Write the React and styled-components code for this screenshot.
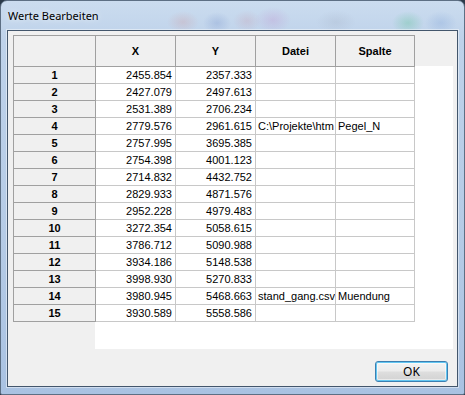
import styled, { createGlobalStyle } from 'styled-components'

const GlobalStyle = createGlobalStyle`
    html, body {
        margin: 0;
        padding: 0;
        background: #2b3a4a;
    }
`;

const Window = styled.div`
    width: 465px;
    height: 395px;
    box-sizing: border-box;
    display: flex;
    flex-direction: column;
    border-radius: 7px 7px 2px 2px;
    border: 1px solid #5d6f84;
    overflow: hidden;
    background:
        radial-gradient(ellipse 16px 11px at 182px 21px, rgba(210, 130, 130, 0.22), transparent),
        radial-gradient(ellipse 14px 11px at 216px 22px, rgba(90, 120, 190, 0.22), transparent),
        radial-gradient(ellipse 14px 11px at 246px 20px, rgba(200, 120, 140, 0.18), transparent),
        radial-gradient(ellipse 18px 13px at 272px 19px, rgba(190, 130, 200, 0.25), transparent),
        radial-gradient(ellipse 20px 12px at 335px 21px, rgba(150, 160, 180, 0.2), transparent),
        radial-gradient(ellipse 16px 12px at 407px 22px, rgba(80, 190, 140, 0.32), transparent),
        radial-gradient(ellipse 16px 12px at 440px 22px, rgba(110, 150, 210, 0.25), transparent),
        linear-gradient(180deg, #cbdcef 0%, #bed2ea 10%, #b5cbe6 60%, #a9c2e2 100%);
`;

const TitleBar = styled.div`
    height: 29px;
    flex: none;
    display: flex;
    align-items: center;
    padding-left: 7px;
    font-family: "Noto Sans", "Open Sans", sans-serif;
    font-size: 11px;
    color: #000;
    text-shadow: 0 0 6px rgba(255, 255, 255, 0.9);
`;

const Client = styled.div`
    flex: 1;
    margin: 0 6px 7px 6px;
    border: 1px solid #43566c;
    box-shadow: 0 0 0 1px rgba(255, 255, 255, 0.45);
    background: #f0f0f0;
    display: flex;
    flex-direction: column;
    padding: 4px 9px 4px 5px;
`;

const TableView = styled.div`
    width: 440px;
    height: 314px;
    flex: none;
    overflow: hidden;
    background:
        linear-gradient(#f0f0f0, #f0f0f0) 0 0 / 100% 31px no-repeat,
        linear-gradient(#f0f0f0, #f0f0f0) 0 0 / 82px 100% no-repeat,
        #ffffff;
`;

const Grid = styled.table`
    border-collapse: separate;
    border-spacing: 0;
    table-layout: fixed;
    width: 402px;
    font-family: "Liberation Sans", Arial, sans-serif;
    font-size: 11px;
    color: #000;
`;

const HeadCell = styled.th`
    height: 30px;
    padding: 0;
    font-weight: bold;
    text-align: center;
    background: #f0f0f0;
    border-top: 1px solid #a0a0a0;
    border-right: 1px solid #a0a0a0;
    border-bottom: 1px solid #a0a0a0;
    border-left: ${p => (p.$first ? '1px solid #a0a0a0' : 'none')};
`;

const RowHead = styled.th`
    height: 16px;
    padding: 0;
    font-weight: bold;
    text-align: center;
    background: #f0f0f0;
    border-left: 1px solid #a0a0a0;
    border-right: 1px solid #a0a0a0;
    border-bottom: 1px solid #a0a0a0;
`;

const Cell = styled.td`
    height: 16px;
    padding: ${p => (p.$num ? '0 3px 0 0' : '0 0 0 2px')};
    text-align: ${p => (p.$num ? 'right' : 'left')};
    white-space: nowrap;
    overflow: hidden;
    background: #fff;
    border-right: 1px solid #c8c8c8;
    border-bottom: 1px solid #c8c8c8;
`;

const Footer = styled.div`
    margin-top: auto;
    display: flex;
    justify-content: flex-end;
`;

const Button = styled.button`
    width: 73px;
    height: 21px;
    box-sizing: border-box;
    padding: 0;
    border: 1px solid #3c7fb1;
    border-radius: 3px;
    box-shadow: inset 0 0 0 1px #63c7f2, inset 0 0 0 2px rgba(255, 255, 255, 0.5);
    background: linear-gradient(180deg, #f3f3f3 0%, #ececec 48%, #dedede 52%, #d2d2d2 100%);
    font-family: "Noto Sans", "Open Sans", sans-serif;
    font-size: 12px;
    color: #000;
`;

const rows = [
    ['2455.854', '2357.333', '', ''],
    ['2427.079', '2497.613', '', ''],
    ['2531.389', '2706.234', '', ''],
    ['2779.576', '2961.615', 'C:\\Projekte\\htm', 'Pegel_N'],
    ['2757.995', '3695.385', '', ''],
    ['2754.398', '4001.123', '', ''],
    ['2714.832', '4432.752', '', ''],
    ['2829.933', '4871.576', '', ''],
    ['2952.228', '4979.483', '', ''],
    ['3272.354', '5058.615', '', ''],
    ['3786.712', '5090.988', '', ''],
    ['3934.186', '5148.538', '', ''],
    ['3998.930', '5270.833', '', ''],
    ['3980.945', '5468.663', 'stand_gang.csv', 'Muendung'],
    ['3930.589', '5558.586', '', ''],
];

const App = () => {
    return (
        <>
            <GlobalStyle />
            <Window>
                <TitleBar>Werte Bearbeiten</TitleBar>
                <Client>
                    <TableView>
                        <Grid>
                            <colgroup>
                                <col style={{ width: 83 }} />
                                <col style={{ width: 80 }} />
                                <col style={{ width: 80 }} />
                                <col style={{ width: 80 }} />
                                <col style={{ width: 79 }} />
                            </colgroup>
                            <thead>
                                <tr>
                                    <HeadCell $first></HeadCell>
                                    <HeadCell>X</HeadCell>
                                    <HeadCell>Y</HeadCell>
                                    <HeadCell>Datei</HeadCell>
                                    <HeadCell>Spalte</HeadCell>
                                </tr>
                            </thead>
                            <tbody>
                                {rows.map((r, i) => (
                                    <tr key={i}>
                                        <RowHead>{i + 1}</RowHead>
                                        <Cell $num>{r[0]}</Cell>
                                        <Cell $num>{r[1]}</Cell>
                                        <Cell>{r[2]}</Cell>
                                        <Cell>{r[3]}</Cell>
                                    </tr>
                                ))}
                            </tbody>
                        </Grid>
                    </TableView>
                    <Footer>
                        <Button>OK</Button>
                    </Footer>
                </Client>
            </Window>
        </>
    )
}

export default App
